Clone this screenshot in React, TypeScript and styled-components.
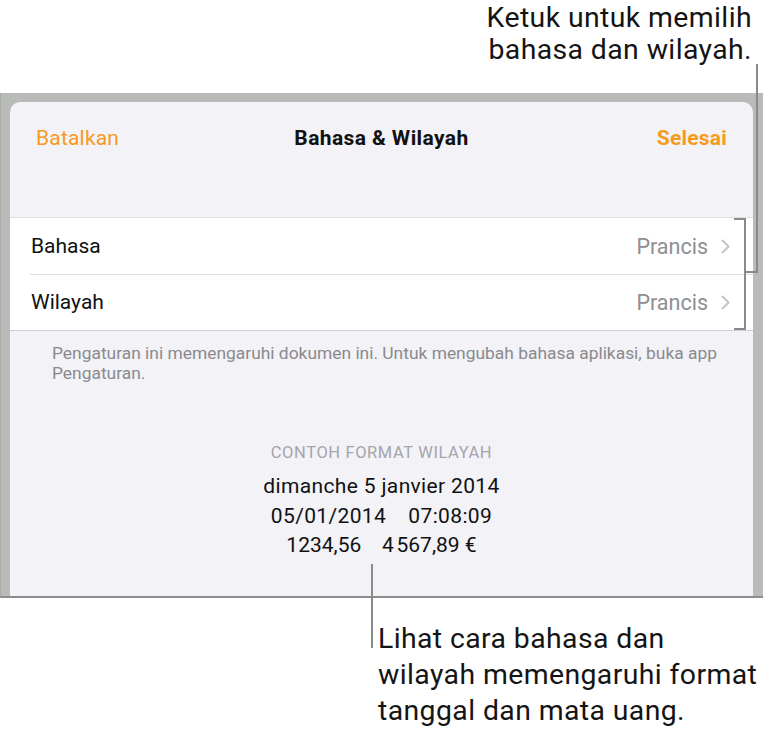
import styled, { createGlobalStyle } from 'styled-components';
import { FC } from 'react';

const GlobalStyle = createGlobalStyle`
  html, body {
    margin: 0;
    padding: 0;
    background: #fff;
  }
  body {
    font-family: Roboto, "Liberation Sans", sans-serif;
    -webkit-font-smoothing: antialiased;
  }
`;

const orange = '#f89a1c';
const leader = '#8a8a8a';

const SC = {
  Stage: styled.div`
    position: relative;
    width: 766px;
    height: 737px;
    overflow: hidden;
  `,
  Callout: styled.div<{ $align: 'left' | 'right' }>`
    font-family: Roboto, "Liberation Sans", sans-serif;
    font-size: 28.4px;
    letter-spacing: 0.4px;
    color: #141414;
    text-align: ${(p) => p.$align};
  `,
  TopCallout: styled.div`
    height: 93px;
    box-sizing: border-box;
    padding: 2px 14px 0 0;
    line-height: 32px;
  `,
  BottomCallout: styled.div`
    padding: 23px 0 0 378px;
    line-height: 36px;
  `,
  Frame: styled.div`
    height: 505px;
    width: 763px;
    box-sizing: border-box;
    padding: 9px 10px 0 10px;
    background: #b9bbb8;
    border-left: 1px solid #a9aba8;
    border-bottom: 2px solid #8d8d8d;
    overflow: hidden;
  `,
  Sheet: styled.div`
    height: 100%;
    margin-left: -1px;
    background: #f2f2f7;
    border-radius: 10px 10px 0 0;
    display: flex;
    flex-direction: column;
  `,
  NavBar: styled.div`
    height: 72px;
    padding: 0 26px;
    display: flex;
    align-items: center;
    justify-content: space-between;
    font-size: 21px;
  `,
  NavButton: styled.span<{ $bold?: boolean }>`
    color: ${orange};
    font-weight: ${(p) => (p.$bold ? 700 : 400)};
    letter-spacing: 0.2px;
    min-width: 100px;
    text-align: ${(p) => (p.$bold ? 'right' : 'left')};
  `,
  NavTitle: styled.span`
    color: #111;
    font-weight: 700;
    letter-spacing: 0.4px;
  `,
  List: styled.ul`
    list-style: none;
    margin: 43px 0 0;
    padding: 0;
    background: #fff;
    border-top: 1px solid #dedee3;
    border-bottom: 1px solid #cfcfd3;
  `,
  Row: styled.li`
    height: 56px;
    display: flex;
    align-items: center;
    padding: 0 23px 0 21px;
    font-size: 21px;
    color: #111;
    & + & {
      box-shadow: inset 0 1px 0 #e0e0e4;
      margin-left: 20px;
      padding-left: 1px;
    }
  `,
  RowLabel: styled.span`
    flex: 1;
  `,
  RowValue: styled.span`
    color: #8e8e93;
    font-size: 21.5px;
    margin-right: 13px;
  `,
  Note: styled.p`
    margin: 12px 0 0;
    padding: 0 16px 0 42px;
    font-size: 17.4px;
    line-height: 20px;
    color: #8a8a8e;
  `,
  Sample: styled.div`
    margin-top: 60px;
    display: flex;
    flex-direction: column;
    align-items: center;
  `,
  SampleTitle: styled.div`
    font-size: 16.5px;
    color: #a5a5aa;
    letter-spacing: 0.6px;
    margin-bottom: 10px;
  `,
  SampleLine: styled.div`
    font-size: 21px;
    letter-spacing: 0.35px;
    line-height: 29.5px;
    color: #111;
    white-space: pre;
  `,
  Leaders: styled.svg`
    position: absolute;
    left: 0;
    top: 0;
    pointer-events: none;
  `,
};

const Chevron: FC = () => (
  <svg width="9" height="15" viewBox="0 0 9 15">
    <path d="M1.5 1.5 L7.5 7.5 L1.5 13.5" fill="none" stroke="#c4c4c8" strokeWidth="2" strokeLinecap="round" strokeLinejoin="round" />
  </svg>
);

const rows = [
  { label: 'Bahasa', value: 'Prancis' },
  { label: 'Wilayah', value: 'Prancis' },
];

const App: FC = () => {
  return (
    <>
      <GlobalStyle />
      <SC.Stage>
        <SC.Callout as={SC.TopCallout} $align="right">
          Ketuk untuk memilih
          <br />
          bahasa dan wilayah.
        </SC.Callout>
        <SC.Frame>
          <SC.Sheet>
            <SC.NavBar>
              <SC.NavButton>Batalkan</SC.NavButton>
              <SC.NavTitle>Bahasa &amp; Wilayah</SC.NavTitle>
              <SC.NavButton $bold>Selesai</SC.NavButton>
            </SC.NavBar>
            <SC.List>
              {rows.map((r) => (
                <SC.Row key={r.label}>
                  <SC.RowLabel>{r.label}</SC.RowLabel>
                  <SC.RowValue>{r.value}</SC.RowValue>
                  <Chevron />
                </SC.Row>
              ))}
            </SC.List>
            <SC.Note>
              Pengaturan ini memengaruhi dokumen ini. Untuk mengubah bahasa aplikasi, buka app Pengaturan.
            </SC.Note>
            <SC.Sample>
              <SC.SampleTitle>CONTOH FORMAT WILAYAH</SC.SampleTitle>
              <SC.SampleLine>dimanche 5 janvier 2014</SC.SampleLine>
              <SC.SampleLine>{'05/01/2014    07:08:09'}</SC.SampleLine>
              <SC.SampleLine>{'1234,56    4\u202F567,89\u00A0€'}</SC.SampleLine>
            </SC.Sample>
          </SC.Sheet>
        </SC.Frame>
        <SC.Callout as={SC.BottomCallout} $align="left">
          Lihat cara bahasa dan
          <br />
          wilayah memengaruhi format
          <br />
          tanggal dan mata uang.
        </SC.Callout>
        <SC.Leaders width="766" height="737">
          <g stroke={leader} strokeWidth="2" fill="none">
            <path d="M757 64 V272 H745" />
            <path d="M734 219 H745 V329 H734" />
            <path d="M372 564 V648" />
          </g>
        </SC.Leaders>
      </SC.Stage>
    </>
  );
};

export default App;
